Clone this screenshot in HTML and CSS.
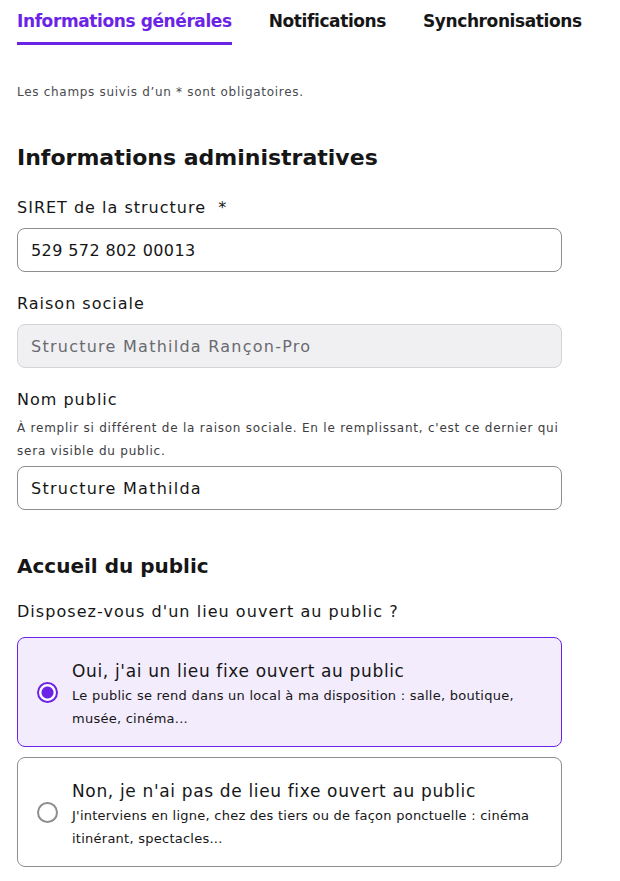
FILE: index.html
```html
<!DOCTYPE html>
<html lang="fr">
<head>
<meta charset="utf-8">
<link rel="stylesheet" href="styles.css">
</head>
<body>
<nav class="tabs">
  <a class="tab active">Informations générales</a>
  <a class="tab">Notifications</a>
  <a class="tab">Synchronisations</a>
</nav>
<p class="mandatory">Les champs suivis d’un * sont obligatoires.</p>
<h2 class="h2">Informations administratives</h2>
<div class="field">
  <label class="label">SIRET de la structure&nbsp; *</label>
  <div class="input numeric">529 572 802 00013</div>
</div>
<div class="field">
  <label class="label">Raison sociale</label>
  <div class="input disabled">Structure Mathilda Rançon-Pro</div>
</div>
<div class="field">
  <label class="label">Nom public</label>
  <p class="desc">À remplir si différent de la raison sociale. En le remplissant, c'est ce dernier qui sera visible du public.</p>
  <div class="input">Structure Mathilda</div>
</div>
<h3 class="h3">Accueil du public</h3>
<p class="question">Disposez-vous d'un lieu ouvert au public ?</p>
<div class="card checked">
  <span class="radio"></span>
  <div class="card-text">
    <div class="card-title">Oui, j'ai un lieu fixe ouvert au public</div>
    <div class="card-desc">Le public se rend dans un local à ma disposition : salle, boutique, musée, cinéma...</div>
  </div>
</div>
<div class="card">
  <span class="radio"></span>
  <div class="card-text">
    <div class="card-title">Non, je n'ai pas de lieu fixe ouvert au public</div>
    <div class="card-desc">J'interviens en ligne, chez des tiers ou de façon ponctuelle : cinéma itinérant, spectacles...</div>
  </div>
</div>
</body>
</html>
```
FILE: styles.css
```css
* { box-sizing: border-box; }
body {
  margin: 0;
  padding: 0 58px 0 17px;
  font-family: "DejaVu Sans", "Open Sans", sans-serif;
  color: #161617;
  background: #fff;
}
.tabs {
  display: flex;
  gap: 37px;
  height: 45px;
  white-space: nowrap;
}
.tab {
  font-size: 17px;
  font-weight: 700;
  letter-spacing: -0.4px;
  padding-top: 11px;
  color: #161617;
  border-bottom: 3px solid transparent;
}
.tab.active {
  color: #6b23e6;
  border-bottom-color: #6b23e6;
}
.mandatory {
  margin: 37px 0 0;
  font-size: 12px;
  line-height: 20px;
  letter-spacing: 0.7px;
  color: #4a4a4f;
}
.h2 {
  margin: 40px 0 0;
  font-size: 22px;
  font-weight: 700;
  line-height: 32px;
}
.field { margin-top: 22px; }
.field + .field { margin-top: 20px; }
.label {
  display: block;
  font-size: 16px;
  line-height: 24px;
  letter-spacing: 1px;
  margin-bottom: 8px;
}
.desc {
  margin: -3px 0 3px;
  font-size: 12px;
  line-height: 23px;
  letter-spacing: 0.77px;
  color: #3d3d42;
}
.input {
  height: 44px;
  border: 1px solid #8d8d92;
  border-radius: 8px;
  padding: 0 13px;
  display: flex;
  align-items: center;
  font-size: 16px;
  letter-spacing: 1.25px;
}
.input.numeric { letter-spacing: 0.4px; }
.input.disabled {
  background: #f0f0f3;
  border-color: #d4d4d8;
  color: #696a6f;
}
.h3 {
  margin: 42px 0 0;
  font-size: 20px;
  font-weight: 700;
  line-height: 28px;
}
.question {
  margin: 20px 0 0;
  font-size: 16px;
  line-height: 24px;
  letter-spacing: 1.05px;
}
.card {
  margin-top: 13px;
  min-height: 110px;
  border: 1px solid #8d8d92;
  border-radius: 8px;
  display: flex;
  align-items: center;
  gap: 14px;
  padding: 0 18px 0 19px;
}
.card + .card { margin-top: 10px; }
.card.checked {
  background: #f3ecfd;
  border-color: #6b23e6;
}
.radio {
  flex: none;
  width: 21px;
  height: 21px;
  border-radius: 50%;
  border: 2px solid #8d8d92;
  background: #fff;
}
.card.checked .radio {
  border-color: #6b23e6;
  background: radial-gradient(circle, #6b23e6 0 5.5px, #fff 6.5px);
}
.card-text { margin-top: 3px; }
.card-title {
  font-size: 17px;
  line-height: 26px;
  letter-spacing: 0.65px;
}
.card-desc {
  font-size: 13px;
  line-height: 23px;
  letter-spacing: 0.25px;
}
```
